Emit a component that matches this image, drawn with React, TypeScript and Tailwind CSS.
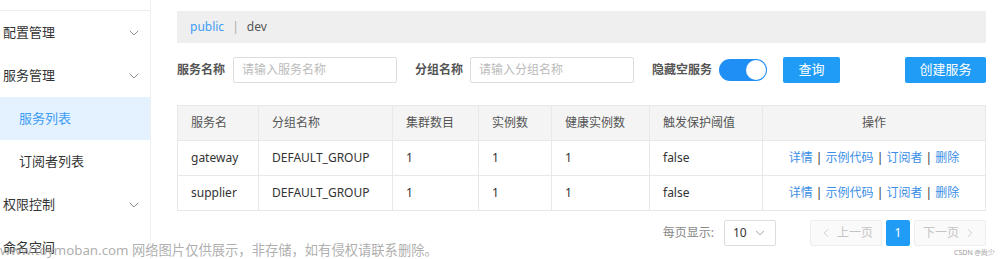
import { ChevronDown, ChevronLeft, ChevronRight } from "lucide-react";

const font = { fontFamily: '"Noto Sans", "Noto Sans CJK SC", sans-serif' };

const rows = [
  { name: "gateway", group: "DEFAULT_GROUP" },
  { name: "supplier", group: "DEFAULT_GROUP" },
];

function NavItem({ label, sub, active, arrow }: { label: string; sub?: boolean; active?: boolean; arrow?: boolean }) {
  return (
    <div
      className={
        "flex h-[43px] shrink-0 items-center justify-between pr-[8px] text-[13px] " +
        (sub ? "pl-[19px] " : "pl-[3px] ") +
        (active ? "bg-[#e3f2fe] text-[#3d9cf3]" : "text-[#333]")
      }
    >
      <span>{label}</span>
      {arrow && <ChevronDown className="h-4 w-4 text-[#888]" strokeWidth={1.4} />}
    </div>
  );
}

export default function App() {
  const th = "border-r border-[#e8e8e8] px-[13px] text-left font-normal text-[#555]";
  const td = "border-r border-[#e8e8e8] px-[13px] text-[#333]";
  return (
    <div className="relative flex h-[259px] w-[1000px] overflow-hidden bg-white text-[12px]" style={font}>
      <div className="flex w-[151px] shrink-0 flex-col border-r border-[#eee]">
        <div className="h-[11px] shrink-0 border-b border-[#eee]" />
        <NavItem label="配置管理" arrow />
        <NavItem label="服务管理" arrow />
        <NavItem label="服务列表" sub active />
        <NavItem label="订阅者列表" sub />
        <NavItem label="权限控制" arrow />
        <NavItem label="命名空间" />
      </div>

      <div className="flex flex-1 flex-col pl-[26px] pr-[14px] pt-[11px]">
        <div className="flex h-[32px] items-center bg-[#efefef] px-[13px] text-[12px]">
          <span className="text-[#3d9cf3]">public</span>
          <span className="mx-[8px] text-[#aaa]">|</span>
          <span className="text-[#555]">dev</span>
        </div>

        <div className="mt-[14px] flex h-[26px] items-center">
          <span className="w-[56px] text-[12px] font-bold text-[#555]">服务名称</span>
          <div className="flex h-[26px] w-[164px] items-center rounded-[2px] border border-[#ddd] px-[8px] text-[#bbb]">请输入服务名称</div>
          <span className="ml-[18px] w-[55px] text-[12px] font-bold text-[#555]">分组名称</span>
          <div className="flex h-[26px] w-[164px] items-center rounded-[2px] border border-[#ddd] px-[8px] text-[#bbb]">请输入分组名称</div>
          <span className="ml-[18px] w-[67px] text-[12px] font-bold text-[#555]">隐藏空服务</span>
          <div className="flex h-[22px] w-[48px] items-center justify-end rounded-full bg-[#1f8ff5] pr-[1px]">
            <div className="h-[20px] w-[20px] rounded-full bg-white" />
          </div>
          <button className="ml-[16px] h-[26px] w-[57px] rounded-[2px] bg-[#209cf6] text-[13px] text-white">查询</button>
          <button className="ml-auto h-[26px] w-[81px] rounded-[2px] bg-[#209cf6] text-[13px] text-white">创建服务</button>
        </div>

        <table className="mt-[22px] w-full table-fixed border-collapse border border-[#e8e8e8] text-[12px]">
          <colgroup>
            <col className="w-[81px]" />
            <col className="w-[134px]" />
            <col className="w-[86px]" />
            <col className="w-[73px]" />
            <col className="w-[98px]" />
            <col className="w-[113px]" />
            <col />
          </colgroup>
          <thead>
            <tr className="h-[35px] bg-[#f4f4f4]">
              <th className={th}>服务名</th>
              <th className={th}>分组名称</th>
              <th className={th}>集群数目</th>
              <th className={th}>实例数</th>
              <th className={th}>健康实例数</th>
              <th className={th}>触发保护阈值</th>
              <th className="text-center font-normal text-[#555]">操作</th>
            </tr>
          </thead>
          <tbody>
            {rows.map((r) => (
              <tr key={r.name} className="h-[35px] border-t border-[#e8e8e8]">
                <td className={td}>{r.name}</td>
                <td className={td}>{r.group}</td>
                <td className={td}>1</td>
                <td className={td}>1</td>
                <td className={td}>1</td>
                <td className={td}>false</td>
                <td className="text-center text-[#333]">
                  <span className="text-[#3a8ee6]">详情</span> | <span className="text-[#3a8ee6]">示例代码</span> |{" "}
                  <span className="text-[#3a8ee6]">订阅者</span> | <span className="text-[#3a8ee6]">删除</span>
                </td>
              </tr>
            ))}
          </tbody>
        </table>

        <div className="mt-[9px] flex h-[26px] items-center justify-end">
          <span className="text-[#888]">每页显示:</span>
          <div className="ml-[10px] flex h-[26px] w-[52px] items-center justify-between rounded-[2px] border border-[#ddd] px-[8px] text-[#333]">
            <span>10</span>
            <ChevronDown className="h-3.5 w-3.5 text-[#888]" strokeWidth={1.4} />
          </div>
          <div className="ml-[34px] flex h-[26px] w-[72px] items-center justify-center gap-[4px] rounded-[2px] border border-[#eee] bg-[#fafafa] text-[#c4c4c4]">
            <ChevronLeft className="h-3.5 w-3.5" strokeWidth={1.4} />
            <span>上一页</span>
          </div>
          <div className="ml-[4px] flex h-[26px] w-[24px] items-center justify-center rounded-[2px] bg-[#209cf6] text-white">1</div>
          <div className="ml-[4px] flex h-[26px] w-[72px] items-center justify-center gap-[4px] rounded-[2px] border border-[#eee] bg-[#fafafa] text-[#c4c4c4]">
            <span>下一页</span>
            <ChevronRight className="h-3.5 w-3.5" strokeWidth={1.4} />
          </div>
        </div>
      </div>

      <div className="absolute left-0 top-[241px] text-[13.3px] text-[#999]/80">www.toymoban.com 网络图片仅供展示，非存储，如有侵权请联系删除。</div>
      <div className="absolute left-[954px] top-[248px] text-[7px] text-[#999]">CSDN @尚少</div>
    </div>
  );
}
